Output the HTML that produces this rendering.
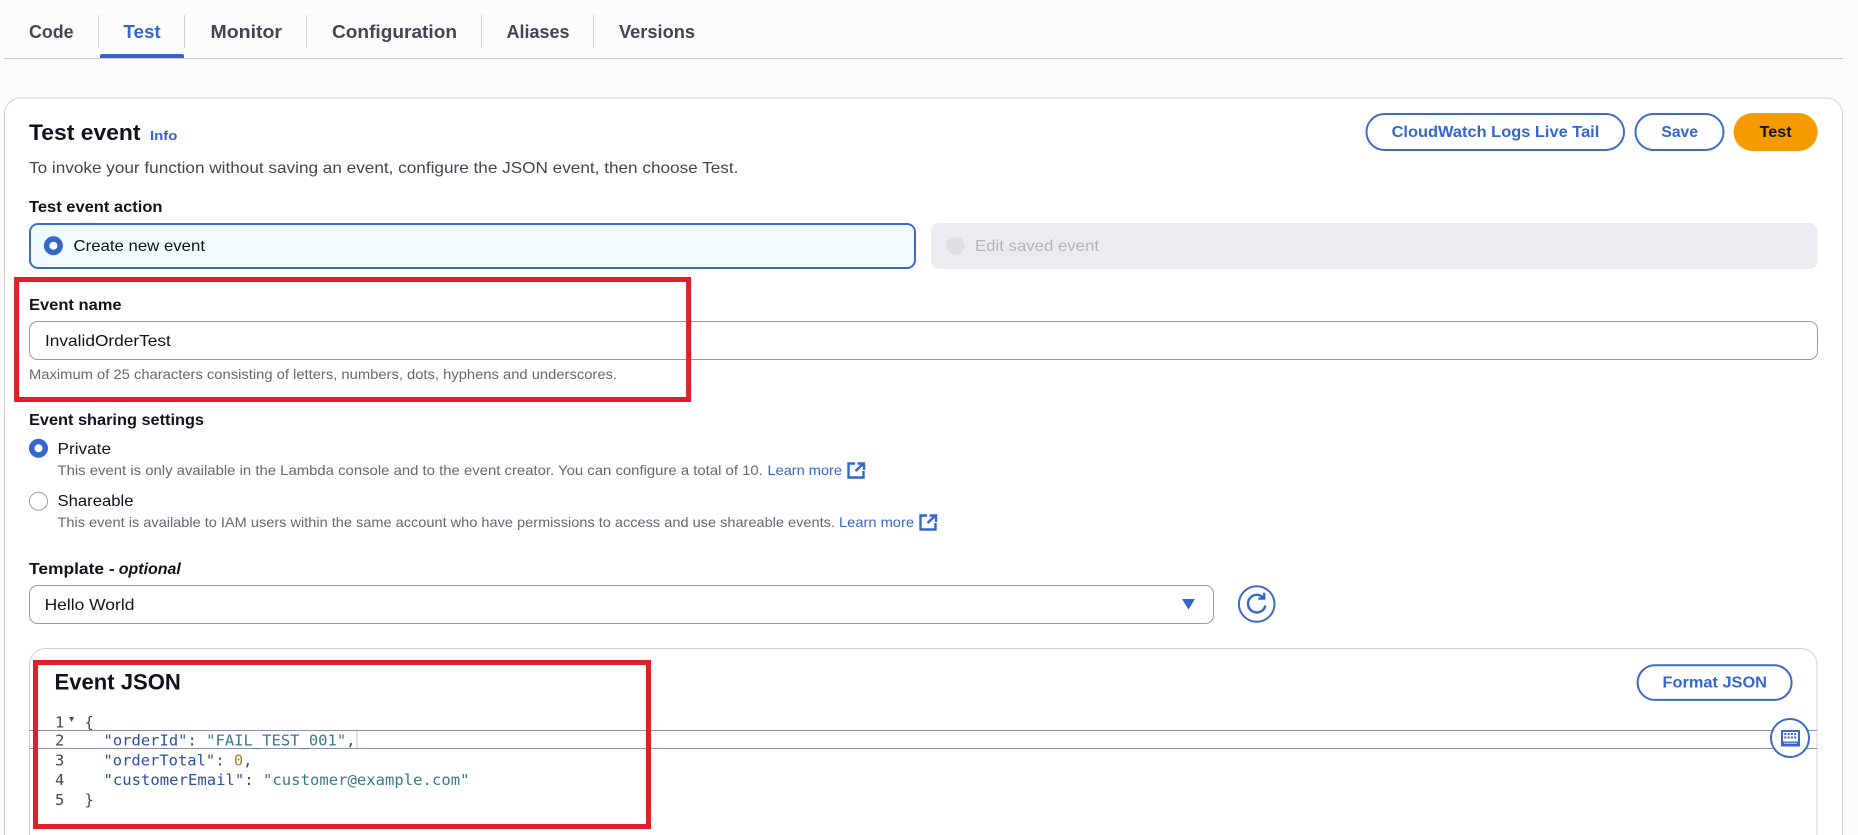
<!DOCTYPE html>
<html lang="en">
<head>
<meta charset="utf-8">
<title>Test event</title>
<style>
html,body{margin:0;padding:0;width:1858px;height:835px;overflow:hidden;background:#fcfcfd}
svg{display:block}
text{font-family:"Liberation Sans",sans-serif;white-space:pre}
.b{font-weight:700}
.d{fill:#0f141a}
.g{fill:#424650}
.s{fill:#656871}
.l{fill:#3566cb}
.m{font-family:"DejaVu Sans Mono","Liberation Mono",monospace;font-size:15.5px}
</style>
</head>
<body>
<svg xmlns="http://www.w3.org/2000/svg" width="1858" height="835" viewBox="0 0 1858 835">
  <rect width="1858" height="835" fill="#fcfcfd"/>

  <!-- Tabs -->
  <g stroke="#d0d0d6" stroke-width="1">
    <path d="M98.5 15V48M184.5 15V48M306.5 15V48M481.5 15V48M593.5 15V48"/>
    <path d="M4 58.5H1843" stroke="#c9c9cf"/>
  </g>
  <path d="M100 58V56a2 2 0 0 1 2-2H182a2 2 0 0 1 2 2V58Z" fill="#3566cb"/>
  <g class="b" font-size="18" fill="#424650">
    <text x="29" y="38" textLength="44.5" lengthAdjust="spacingAndGlyphs">Code</text>
    <text x="123.4" y="38" textLength="37.3" lengthAdjust="spacingAndGlyphs" fill="#3566cb">Test</text>
    <text x="210.5" y="38" textLength="71.5" lengthAdjust="spacingAndGlyphs">Monitor</text>
    <text x="332" y="38" textLength="125" lengthAdjust="spacingAndGlyphs">Configuration</text>
    <text x="506.5" y="38" textLength="63" lengthAdjust="spacingAndGlyphs">Aliases</text>
    <text x="619" y="38" textLength="76" lengthAdjust="spacingAndGlyphs">Versions</text>
  </g>

  <!-- Outer card -->
  <path d="M4.5 850V114a16 16 0 0 1 16-16H1826.5a16 16 0 0 1 16 16V850Z" fill="#fff" stroke="#cfcfd5"/>

  <text x="29" y="140" class="b d" font-size="22" textLength="111.5" lengthAdjust="spacingAndGlyphs">Test event</text>
  <text x="150" y="140" class="b l" font-size="13" textLength="27.3" lengthAdjust="spacingAndGlyphs">Info</text>
  <text x="29" y="173" class="g" font-size="16" textLength="709.4" lengthAdjust="spacingAndGlyphs">To invoke your function without saving an event, configure the JSON event, then choose Test.</text>

  <!-- Header buttons -->
  <rect x="1366.5" y="114" width="257.5" height="36" rx="18" fill="#fff" stroke="#3d6ac7" stroke-width="2"/>
  <text x="1391.6" y="137" class="b l" font-size="16" textLength="207.7" lengthAdjust="spacingAndGlyphs">CloudWatch Logs Live Tail</text>
  <rect x="1635.5" y="114" width="88" height="36" rx="18" fill="#fff" stroke="#3d6ac7" stroke-width="2"/>
  <text x="1661.4" y="137" class="b l" font-size="16" textLength="36.6" lengthAdjust="spacingAndGlyphs">Save</text>
  <rect x="1733.6" y="113" width="84" height="38" rx="19" fill="#f59b00"/>
  <text x="1759.6" y="137" class="b" fill="#0f141a" font-size="16" textLength="32" lengthAdjust="spacingAndGlyphs">Test</text>

  <!-- Test event action -->
  <text x="29" y="212" class="b d" font-size="16" textLength="133.5" lengthAdjust="spacingAndGlyphs">Test event action</text>
  <rect x="30" y="224" width="885" height="44" rx="8" fill="#f0fbff" stroke="#3d6ac7" stroke-width="2"/>
  <circle cx="53.4" cy="245.7" r="9.5" fill="#3566cb"/>
  <circle cx="53.4" cy="245.7" r="4" fill="#fff"/>
  <text x="73.5" y="251" class="d" font-size="16" textLength="131.5" lengthAdjust="spacingAndGlyphs">Create new event</text>

  <rect x="931" y="223" width="886.6" height="46" rx="8" fill="#ebebf0"/>
  <circle cx="955.4" cy="245.7" r="9.2" fill="#dedee3"/>
  <text x="975" y="251" fill="#b4b4bb" font-size="16" textLength="124" lengthAdjust="spacingAndGlyphs">Edit saved event</text>

  <!-- Event name -->
  <text x="29" y="310" class="b d" font-size="16" textLength="92.6" lengthAdjust="spacingAndGlyphs">Event name</text>
  <rect x="29.5" y="321.5" width="1788" height="38" rx="8" fill="#fff" stroke="#9a9aa2"/>
  <text x="45" y="346" class="d" font-size="16" textLength="125.8" lengthAdjust="spacingAndGlyphs">InvalidOrderTest</text>
  <text x="29" y="379" class="s" font-size="14" textLength="588" lengthAdjust="spacingAndGlyphs">Maximum of 25 characters consisting of letters, numbers, dots, hyphens and underscores.</text>

  <!-- Sharing -->
  <text x="29" y="425" class="b d" font-size="16" textLength="175" lengthAdjust="spacingAndGlyphs">Event sharing settings</text>
  <circle cx="38.5" cy="448.3" r="9.5" fill="#3566cb"/>
  <circle cx="38.5" cy="448.3" r="4" fill="#fff"/>
  <text x="57.5" y="454" class="d" font-size="16" textLength="53.5" lengthAdjust="spacingAndGlyphs">Private</text>
  <text x="57.5" y="475" class="s" font-size="14" textLength="705.3" lengthAdjust="spacingAndGlyphs">This event is only available in the Lambda console and to the event creator. You can configure a total of 10.</text>
  <text x="767.5" y="475" class="l" font-size="14" textLength="74.5" lengthAdjust="spacingAndGlyphs">Learn more</text>
  <g fill="none" stroke="#3566cb" stroke-width="2.4">
    <path d="M855 463.5H848.5V477.5H863.5V471"/>
    <path d="M855.5 471L863 464M857.5 463.5H864V470"/>
  </g>

  <circle cx="38.5" cy="501.3" r="9" fill="#fff" stroke="#9a9aa2"/>
  <text x="57.5" y="506" class="d" font-size="16" textLength="76" lengthAdjust="spacingAndGlyphs">Shareable</text>
  <text x="57.5" y="527" class="s" font-size="14" textLength="777.5" lengthAdjust="spacingAndGlyphs">This event is available to IAM users within the same account who have permissions to access and use shareable events.</text>
  <text x="839" y="527" class="l" font-size="14" textLength="75" lengthAdjust="spacingAndGlyphs">Learn more</text>
  <g fill="none" stroke="#3566cb" stroke-width="2.4" transform="translate(72 52)">
    <path d="M855 463.5H848.5V477.5H863.5V471"/>
    <path d="M855.5 471L863 464M857.5 463.5H864V470"/>
  </g>

  <!-- Template -->
  <text x="29" y="574" class="b d" font-size="16" textLength="85.7" lengthAdjust="spacingAndGlyphs">Template -</text>
  <text x="118.8" y="574" class="b d" font-style="italic" font-size="16" textLength="62" lengthAdjust="spacingAndGlyphs">optional</text>
  <rect x="29.5" y="585.5" width="1184" height="38" rx="8" fill="#fff" stroke="#9a9aa2"/>
  <text x="44.6" y="610" class="d" font-size="16" textLength="89.8" lengthAdjust="spacingAndGlyphs">Hello World</text>
  <path d="M1182 599H1195L1188.5 609.5Z" fill="#3566cb"/>
  <circle cx="1256.7" cy="604" r="17.8" fill="#fff" stroke="#3d6ac7" stroke-width="2"/>
  <g fill="none" stroke="#3566cb" stroke-width="2.4">
    <path d="M1263.2 597.6A8.8 8.8 0 1 0 1265.4 605.5"/>
    <path d="M1264.2 592.8V598.6H1258.4"/>
  </g>

  <!-- Inner card -->
  <path d="M29.5 850V664.5a16 16 0 0 1 16-16H1801a16 16 0 0 1 16 16V850Z" fill="#fff" stroke="#cfcfd5"/>
  <text x="54.5" y="689.3" class="b d" font-size="22" textLength="126.3" lengthAdjust="spacingAndGlyphs">Event JSON</text>

  <rect x="1637.6" y="665.3" width="154" height="34.6" rx="17.3" fill="#fff" stroke="#3d6ac7" stroke-width="2"/>
  <text x="1662.5" y="687.3" class="b l" font-size="16" textLength="104.5" lengthAdjust="spacingAndGlyphs">Format JSON</text>

  <!-- Active line -->
  <path d="M29.5 730.5H1817M29.5 748.5H1817" stroke="#8f8fa6" stroke-width="1"/>
  <path d="M357 731V748" stroke="#c6c6cd" stroke-width="1"/>

  <!-- Code -->
  <g class="m" fill="#424650">
    <text x="55" y="727.7" class="m">1</text>
    <text x="55" y="745.7" class="m">2</text>
    <text x="55" y="765.7" class="m">3</text>
    <text x="55" y="785" class="m">4</text>
    <text x="55" y="805" class="m">5</text>
  </g>
  <path d="M69.3 717H73.9L71.6 722Z" fill="#424650"/>
  <text x="84.5" y="727.7" class="m" fill="#424650">{</text>
  <text x="103.5" y="745.7" class="m" textLength="252" lengthAdjust="spacingAndGlyphs" fill="#424650"><tspan fill="#2f4f9f">"orderId"</tspan>: <tspan fill="#3a7a80">"FAIL_TEST_001"</tspan>,</text>
  <text x="103.5" y="765.7" class="m" textLength="149" lengthAdjust="spacingAndGlyphs" fill="#424650"><tspan fill="#2f4f9f">"orderTotal"</tspan>: <tspan fill="#a87a2e">0</tspan>,</text>
  <text x="103.5" y="785" class="m" textLength="366" lengthAdjust="spacingAndGlyphs" fill="#424650"><tspan fill="#2f4f9f">"customerEmail"</tspan>: <tspan fill="#3a7a80">"customer@example.com"</tspan></text>
  <text x="84.5" y="805" class="m" fill="#424650">}</text>

  <!-- Keyboard button -->
  <circle cx="1790" cy="738" r="19" fill="#fff" stroke="#3d6ac7" stroke-width="2"/>
  <rect x="1782" y="731" width="17" height="14.5" fill="#fff" stroke="#3566cb" stroke-width="2"/>
  <rect x="1781" y="741.5" width="19" height="5" fill="#3566cb"/>
  <rect x="1784" y="742.8" width="13" height="1" fill="#c9d6f2"/>
  <g fill="#3566cb">
    <rect x="1784.3" y="733" width="2" height="2"/><rect x="1787.6" y="733" width="2" height="2"/><rect x="1790.9" y="733" width="2" height="2"/><rect x="1794.2" y="733" width="2" height="2"/>
    <rect x="1784.3" y="736.5" width="2" height="2"/><rect x="1787.6" y="736.5" width="2" height="2"/><rect x="1790.9" y="736.5" width="2" height="2"/><rect x="1794.2" y="736.5" width="2" height="2"/>
  </g>

  <!-- Red annotation boxes -->
  <rect x="16.6" y="279.5" width="672" height="120" fill="none" stroke="#e31e2b" stroke-width="5"/>
  <rect x="35.5" y="662.5" width="613" height="164" fill="none" stroke="#e31e2b" stroke-width="5"/>
</svg>
</body>
</html>
